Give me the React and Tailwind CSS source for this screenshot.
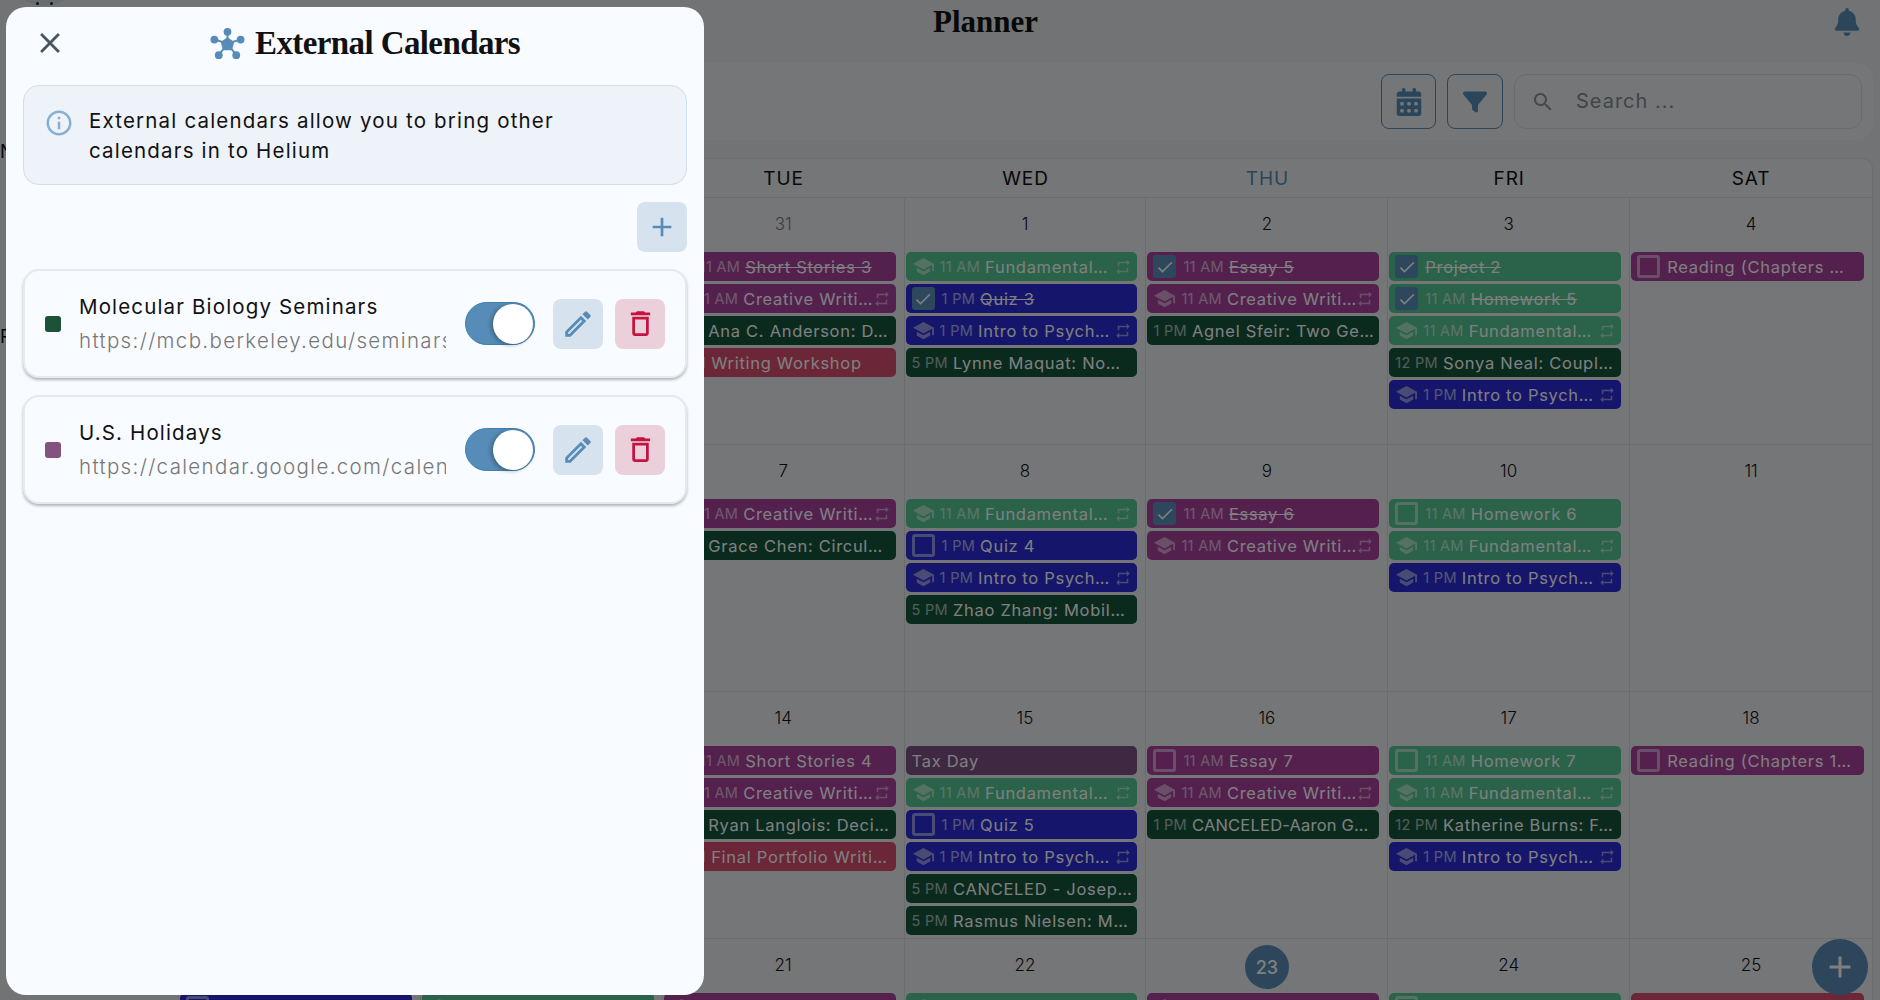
import { FaBell, FaCalendarDays, FaFilter } from "react-icons/fa6";

const PATHS = {
  hat: "M5 13.18v4L12 21l7-3.82v-4L12 17zM12 3 1 9l11 6 9-4.91V17h2V9z",
  repeat: "M7 7h10v3l4-4-4-4v3H5v6h2zm10 10H7v-3l-4 4 4 4v-3h12v-6h-2z",
  check: "M9 16.17 4.83 12l-1.42 1.41L9 19 21 7l-1.41-1.41z",
  close: "M19 6.41 17.59 5 12 10.59 6.41 5 5 6.41 10.59 12 5 17.59 6.41 19 12 13.41 17.59 19 19 17.59 13.41 12z",
  plus: "M19 13h-6v6h-2v-6H5v-2h6V5h2v6h6z",
  info: "M11 7h2v2h-2zm0 4h2v6h-2zm1-9C6.48 2 2 6.48 2 12s4.48 10 10 10 10-4.48 10-10S17.52 2 12 2m0 18c-4.41 0-8-3.59-8-8s3.59-8 8-8 8 3.59 8 8-3.59 8-8 8",
  edit: "M3 17.25V21h3.75L17.81 9.94l-3.75-3.75zM5.92 19H5v-.92l9.06-9.06.92.92zM20.71 7.04c.39-.39.39-1.02 0-1.41l-2.34-2.34a.9959.9959 0 0 0-1.41 0l-1.83 1.83 3.75 3.75z",
  trash: "M6 19c0 1.1.9 2 2 2h8c1.1 0 2-.9 2-2V7H6zM8 9h8v10H8zm7.5-5-1-1h-5l-1 1H5v2h14V4z",
  search: "M15.5 14h-.79l-.28-.27C15.41 12.59 16 11.11 16 9.5 16 5.91 13.09 3 9.5 3S3 5.91 3 9.5 5.91 16 9.5 16c1.61 0 3.09-.59 4.23-1.57l.27.28v.79l5 4.99L20.49 19zm-6 0C7.01 14 5 11.99 5 9.5S7.01 5 9.5 5 14 7.01 14 9.5 11.99 14 9.5 14",
};

const COLORS = {
  green: "bg-[#54c692]",
  blue: "bg-[#2a2cd6]",
  purple: "bg-[#a8429e]",
  dark: "bg-[#14543c]",
  red: "bg-[#d64c70]",
  holiday: "bg-[#7e5082]",
};

function Icon({ name, className }) {
  return (
    <svg viewBox="0 0 24 24" fill="currentColor" className={className}>
      <path d={PATHS[name]} />
    </svg>
  );
}

// helpers so the calendar data below stays short
const fundamental = { c: "green", kind: "hat", time: "11 AM", title: "Fundamental…", repeat: true };
const creative = { c: "purple", kind: "hat", time: "11 AM", title: "Creative Writi…", repeat: true };
const intro = { c: "blue", kind: "hat", time: "1 PM", title: "Intro to Psych…", repeat: true };

const WEEKS = [
  {
    days: [29, 30, 31, 1, 2, 3, 4],
    events: [
      [],
      [],
      [
        { c: "purple", kind: "done", time: "11 AM", title: "Short Stories 3" },
        creative,
        { c: "dark", time: "1 PM", title: "Ana C. Anderson: D…" },
        { c: "red", time: "5 PM", title: "Writing Workshop" },
      ],
      [
        fundamental,
        { c: "blue", kind: "done", time: "1 PM", title: "Quiz 3" },
        intro,
        { c: "dark", time: "5 PM", title: "Lynne Maquat: No…" },
      ],
      [
        { c: "purple", kind: "done", time: "11 AM", title: "Essay 5" },
        creative,
        { c: "dark", time: "1 PM", title: "Agnel Sfeir: Two Ge…" },
      ],
      [
        { c: "green", kind: "done", title: "Project 2" },
        { c: "green", kind: "done", time: "11 AM", title: "Homework 5" },
        fundamental,
        { c: "dark", time: "12 PM", title: "Sonya Neal: Coupl…" },
        intro,
      ],
      [{ c: "purple", kind: "todo", title: "Reading (Chapters …" }],
    ],
  },
  {
    days: [5, 6, 7, 8, 9, 10, 11],
    events: [
      [],
      [],
      [creative, { c: "dark", time: "1 PM", title: "Grace Chen: Circul…" }],
      [
        fundamental,
        { c: "blue", kind: "todo", time: "1 PM", title: "Quiz 4" },
        intro,
        { c: "dark", time: "5 PM", title: "Zhao Zhang: Mobil…" },
      ],
      [{ c: "purple", kind: "done", time: "11 AM", title: "Essay 6" }, creative],
      [{ c: "green", kind: "todo", time: "11 AM", title: "Homework 6" }, fundamental, intro],
      [],
    ],
  },
  {
    days: [12, 13, 14, 15, 16, 17, 18],
    events: [
      [],
      [],
      [
        { c: "purple", kind: "todo", time: "11 AM", title: "Short Stories 4" },
        creative,
        { c: "dark", time: "1 PM", title: "Ryan Langlois: Deci…" },
        { c: "red", time: "5 PM", title: "Final Portfolio Writi…" },
      ],
      [
        { c: "holiday", title: "Tax Day" },
        fundamental,
        { c: "blue", kind: "todo", time: "1 PM", title: "Quiz 5" },
        intro,
        { c: "dark", time: "5 PM", title: "CANCELED - Josep…" },
        { c: "dark", time: "5 PM", title: "Rasmus Nielsen: M…" },
      ],
      [
        { c: "purple", kind: "todo", time: "11 AM", title: "Essay 7" },
        creative,
        { c: "dark", time: "1 PM", title: "CANCELED-Aaron G…", tight: true },
      ],
      [
        { c: "green", kind: "todo", time: "11 AM", title: "Homework 7" },
        fundamental,
        { c: "dark", time: "12 PM", title: "Katherine Burns: F…" },
        intro,
      ],
      [{ c: "purple", kind: "todo", title: "Reading (Chapters 1…" }],
    ],
  },
  {
    days: [19, 20, 21, 22, 23, 24, 25],
    events: [
      [{ c: "blue", kind: "todo", title: "Quiz 6" }],
      [fundamental],
      [creative],
      [fundamental],
      [creative],
      [{ c: "green", kind: "todo", time: "11 AM", title: "Homework 8" }],
      [{ c: "red", title: "Final Portfolio (Draft)" }],
    ],
  },
];

const DAY_NAMES = ["SUN", "MON", "TUE", "WED", "THU", "FRI", "SAT"];

function CalendarEvent({ c, kind, time, title, repeat, tight }) {
  const struck = kind === "done";
  return (
    <div className={`flex h-[29px] ml-px mr-2 mb-[3px] items-center rounded-[5px] pl-[6px] pr-[3px] text-white ${COLORS[c]}`}>
      {kind === "done" && (
        <span className="mr-[7px] flex h-[23px] w-[23px] shrink-0 items-center justify-center rounded-[3px] bg-[#5b8fb9]">
          <Icon name="check" className="h-5 w-5" />
        </span>
      )}
      {kind === "todo" && (
        <span className="mr-[7px] h-[23px] w-[23px] shrink-0 rounded-[3px] border-[3px] border-white/50" />
      )}
      {kind === "hat" && <Icon name="hat" className="mr-[5px] h-[23px] w-[23px] shrink-0 opacity-50" />}
      {time && <span className="mr-[5px] shrink-0 pt-px text-[14.5px] tracking-[0.3px] opacity-60">{time}</span>}
      <span className={`min-w-0 flex-1 truncate pt-px text-[16.5px] ${tight ? "tracking-[0.2px]" : "tracking-[0.7px]"} ${struck ? "line-through" : ""}`}>{title}</span>
      {repeat && <Icon name="repeat" className="-ml-1 mr-[2px] h-[18px] w-[18px] shrink-0 opacity-50" />}
    </div>
  );
}

function Week({ week }) {
  return (
    <div className="grid h-[247px] grid-cols-7 border-b border-[#d5d8dc]">
      {week.days.map((day, i) => (
        <div key={day} className="border-r border-[#d5d8dc] last:border-r-0">
          <div className="flex h-[54px] justify-center pt-[14px]">
            {day === 23 ? (
              <span className="-mt-[8px] flex h-11 w-11 items-center justify-center rounded-full bg-[#5a8db8] text-[18px] font-medium text-white">
                {day}
              </span>
            ) : (
              <span className={`text-[17px] font-light ${day === 31 || day === 30 || day === 29 ? "text-[#7b7d80]" : "text-[#111]"}`}>
                {day}
              </span>
            )}
          </div>
          {week.events[i].map((ev, j) => (
            <CalendarEvent key={j} {...ev} />
          ))}
        </div>
      ))}
    </div>
  );
}

function CalendarCard({ color, name, url }) {
  return (
    <div className="flex h-[109px] items-center rounded-2xl border-2 border-[#e6e9ee] bg-[#f8fbff] pl-5 shadow-[0_2px_3px_rgba(0,0,0,0.28)]">
      <span className={`h-4 w-4 shrink-0 rounded-[3px] ${color}`} />
      <div className="ml-[18px] w-[367px] shrink-0 overflow-hidden">
        <div className="text-[20.5px] leading-[28px] tracking-[1.15px] text-[#111]">{name}</div>
        <div className="mt-[6px] whitespace-nowrap text-[20.5px] font-light leading-[28px] tracking-[1.35px] text-[#777]">{url}</div>
      </div>
      <div className="ml-[19px] flex h-[43px] w-[70px] shrink-0 items-center justify-end rounded-full border border-[#3f7fae] bg-[#568cb7] pr-px">
        <span className="h-10 w-10 rounded-full bg-white shadow-[-2px_1px_4px_rgba(0,0,0,0.3)]" />
      </div>
      <button className="ml-[18px] flex h-[50px] w-[50px] shrink-0 items-center justify-center rounded-lg bg-[#d6e3ee] text-[#568cb7]">
        <Icon name="edit" className="h-[34px] w-[34px]" />
      </button>
      <button className="ml-3 flex h-[50px] w-[50px] shrink-0 items-center justify-center rounded-lg bg-[#ebd0db] text-[#c2143f]">
        <Icon name="trash" className="h-[33px] w-[33px]" />
      </button>
    </div>
  );
}

export default function App() {
  return (
    <div className="relative flex h-screen overflow-hidden bg-[#e3e6e9] font-['Inter',sans-serif]">
      {/* sidebar, almost entirely behind the drawer */}
      <aside className="w-[178px] shrink-0 text-[18px] text-[#111]">
        <div className="-mt-[66px] ml-2 flex h-[72px] w-[72px] items-end justify-center gap-[11px] rounded-full bg-[#d5d9dd] pb-px">
          <span className="h-[3px] w-[3px] rounded-full bg-[#123]" />
          <span className="h-[3px] w-[3px] rounded-full bg-[#123]" />
        </div>
        <div className="mt-[132px]">N</div>
        <div className="mt-[158px]">R</div>
      </aside>

      <main className="min-w-0 flex-1 pr-[7px]">
        <header className="flex h-[44px] items-center">
          <h1 className="ml-[755px] font-['Liberation_Serif',serif] text-[31px] font-bold text-[#111]">Planner</h1>
          <FaBell className="ml-auto mr-[12px] text-[28px] text-[#568cb7]" />
        </header>

        <div className="mt-[19px] flex h-[77px] items-center justify-end gap-[11px] rounded-2xl bg-[#e8ecf0] pr-[11px]">
          <button className="flex h-[55px] w-[55px] items-center justify-center rounded-lg border border-[#568cb7] text-[#568cb7]">
            <FaCalendarDays className="text-[28px]" />
          </button>
          <button className="flex h-[55px] w-[56px] items-center justify-center rounded-lg border border-[#568cb7] text-[#568cb7]">
            <FaFilter className="text-[24px]" />
          </button>
          <div className="flex h-[55px] w-[348px] items-center rounded-xl border border-[#d3d6da] pl-[16px]">
            <Icon name="search" className="h-[24px] w-[24px] text-[#8d9094]" />
            <span className="mb-[2px] ml-[21px] text-[20px] tracking-[1px] text-[#85888c]">Search ...</span>
          </div>
        </div>

        <div className="mt-[18px] rounded-t-[10px] border border-b-0 border-[#d5d8dc] bg-[#e8ecf0]">
          <div className="grid h-[39px] grid-cols-7 border-b border-[#d5d8dc]">
            {DAY_NAMES.map((d) => (
              <div key={d} className={`flex items-center justify-center pt-[2px] text-[19px] tracking-[0.9px] ${d === "THU" ? "text-[#568cb7]" : "text-[#111]"}`}>
                {d}
              </div>
            ))}
          </div>
          {WEEKS.map((week) => (
            <Week key={week.days[0]} week={week} />
          ))}
        </div>
      </main>

      <button className="absolute bottom-[5px] right-[12px] flex h-14 w-14 items-center justify-center rounded-full bg-[#5a8db8] text-white">
        <Icon name="plus" className="h-9 w-9" />
      </button>

      {/* scrim */}
      <div className="absolute inset-0 bg-[rgba(0,0,0,0.5)]" />

      {/* drawer */}
      <div className="absolute bottom-[5px] left-[6px] top-[7px] w-[698px] rounded-[20px] bg-[#f8fbff] px-[17px]">
        <div className="flex h-[72px] items-center">
          <button className="ml-[10px] text-[#4a5560]">
            <Icon name="close" className="h-[34px] w-[34px]" />
          </button>
          <svg viewBox="0 0 36 34" className="ml-[143px] h-[33px] w-[35px] text-[#568cb7]" fill="currentColor" stroke="currentColor">
            <path strokeWidth="2" d="M18 5V17M5 13 18 17M31 13 18 17M9 29 18 17M27 29 18 17" />
            <path stroke="none" d="M18 10.5 25 15.5 22.5 24H13.5L11 15.5Z" />
            <circle cx="18" cy="5" r="4" stroke="none" />
            <circle cx="4.5" cy="13" r="4" stroke="none" />
            <circle cx="31.5" cy="13" r="4" stroke="none" />
            <circle cx="9" cy="29" r="4" stroke="none" />
            <circle cx="27" cy="29" r="4" stroke="none" />
          </svg>
          <h2 className="ml-[10px] pt-[2px] font-['Liberation_Serif',serif] text-[33px] font-bold tracking-[-0.6px] text-[#111]">External Calendars</h2>
        </div>

        <div className="mt-[6px] flex h-[100px] items-start rounded-2xl border border-[#cfe0ee] bg-[#eef2f9] pl-[20px] pt-[20px]">
          <Icon name="info" className="mt-[2px] h-[30px] w-[30px] shrink-0 text-[#85b0d2]" />
          <p className="ml-[15px] w-[590px] text-[20.5px] leading-[30px] tracking-[1.18px] text-[#111]">
            External calendars allow you to bring other
            <br />
            calendars in to Helium
          </p>
        </div>

        <div className="mt-[17px] flex justify-end">
          <button className="flex h-[50px] w-[50px] items-center justify-center rounded-lg bg-[#d6e3ee] text-[#568cb7]">
            <Icon name="plus" className="h-8 w-8" />
          </button>
        </div>

        <div className="mt-[17px] flex flex-col gap-[17px]">
          <CalendarCard color="bg-[#1d5138]" name="Molecular Biology Seminars" url="https://mcb.berkeley.edu/seminars" />
          <CalendarCard color="bg-[#83537f]" name="U.S. Holidays" url="https://calendar.google.com/calendar/ical" />
        </div>
      </div>
    </div>
  );
}
